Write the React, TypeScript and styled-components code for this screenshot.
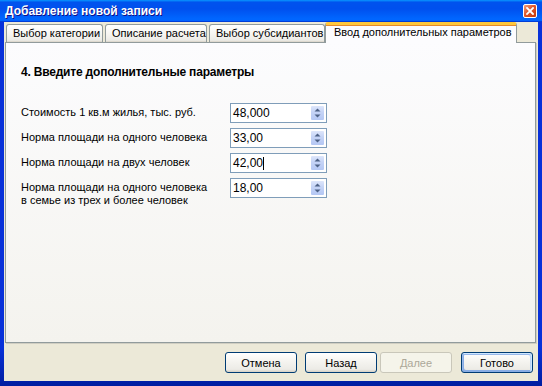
import React from "react";
import styled, { createGlobalStyle } from "styled-components";

const Global = createGlobalStyle`
  html, body { margin: 0; padding: 0; background: #ECE9D8; }
  body { font-family: "Liberation Sans", Arial, sans-serif; }
`;

const FONT = `"Liberation Sans", Arial, sans-serif`;

const Window = styled.div`
  width: 542px;
  height: 386px;
  box-sizing: border-box;
  display: flex;
  flex-direction: column;
  background: linear-gradient(to bottom, #0831d9 0%, #0831d9 90%, #001ea0 100%);
  overflow: hidden;
`;

const TitleBar = styled.div`
  height: 22px;
  flex: none;
  display: flex;
  align-items: center;
  justify-content: space-between;
  padding: 0 5px 0 5px;
  background: linear-gradient(
    to bottom,
    #0997ff 0%,
    #0053ee 10%,
    #0050ee 40%,
    #0066ff 85%,
    #0066ff 92%,
    #005bff 95%,
    #003dd7 97%,
    #003dd7 100%
  );
`;

const Title = styled.span`
  font-family: ${FONT};
  font-weight: bold;
  font-size: 12px;
  color: #fff;
  text-shadow: 1px 1px #0f1089;
`;

const CloseBtn = styled.div`
  width: 14px;
  height: 14px;
  box-sizing: border-box;
  border: 1px solid #fff;
  border-radius: 2px;
  background: linear-gradient(135deg, #f0a07e 0%, #e0582c 45%, #c3390d 100%);
  display: flex;
  align-items: center;
  justify-content: center;
`;

const Client = styled.div`
  flex: 1;
  margin: 0 4px 5px 4px;
  background: #ece9d8;
  display: flex;
  flex-direction: column;
`;

const TabStrip = styled.div`
  display: flex;
  align-items: flex-end;
  height: 20px;
  padding-left: 2px;
  position: relative;
  z-index: 1;
`;

const Tab = styled.div<{ $active?: boolean; $w: number }>`
  box-sizing: border-box;
  width: ${(p) => p.$w}px;
  font-family: ${FONT};
  font-size: 11px;
  color: #000;
  border: 1px solid #919b9c;
  border-bottom: none;
  border-radius: 3px 3px 0 0;
  margin-right: ${(p) => (p.$active ? 0 : 2)}px;
  ${(p) =>
    p.$active
      ? `
    height: 21px;
    margin-left: -2px;
    margin-bottom: -1px;
    background: #fcfcfe;
    border-top: 3px solid #ffc83c;
    box-shadow: inset 0 1px 0 #e68b2c;
    padding: 1px 0 0 8px;
  `
      : `
    height: 18px;
    background: linear-gradient(to bottom, #fff 0%, #f7f6f2 50%, #ecebe6 90%, #d8d2c6 100%);
    padding: 2px 0 0 6px;
  `}
  white-space: nowrap;
  line-height: 13px;
`;

const Panel = styled.div`
  box-sizing: border-box;
  margin: 0 2px 0 1px;
  height: 301px;
  border: 1px solid #919b9c;
  box-shadow: 1px 1px 0 #d0cec2;
  background: linear-gradient(to bottom, #fcfcfe, #f4f3ee);
  padding: 22px 0 0 15px;
`;

const Heading = styled.div`
  font-family: ${FONT};
  font-weight: bold;
  font-size: 12px;
  letter-spacing: -0.2px;
  line-height: 14px;
  color: #000;
  margin-bottom: 24px;
`;

const Form = styled.div`
  display: grid;
  grid-template-columns: 209px 97px;
  row-gap: 5px;
`;

const Label = styled.div`
  font-family: ${FONT};
  font-size: 11px;
  line-height: 13px;
  color: #000;
  padding-top: 3px;
`;

const Field = styled.div`
  box-sizing: border-box;
  height: 20px;
  border: 1px solid #7f9db9;
  background: #fff;
  display: flex;
  align-items: center;
  justify-content: space-between;
  padding: 0 1px 0 2px;
`;

const Value = styled.span<{ $caret?: boolean }>`
  font-family: ${FONT};
  font-size: 12px;
  color: #000;
  ${(p) => (p.$caret ? "border-right: 1px solid #000; line-height: 13px;" : "")}
`;

const Spin = styled.div`
  width: 15px;
  height: 16px;
  box-sizing: border-box;
  border: 1px solid #fff;
  border-radius: 2px;
  background: linear-gradient(to bottom, #dde6fb 0%, #c4d3f6 45%, #b4c7f4 100%);
  display: flex;
  align-items: center;
  justify-content: center;
`;

const Footer = styled.div`
  display: flex;
  justify-content: flex-end;
  padding: 9px 5px 0 0;
`;

const Button = styled.div<{ $disabled?: boolean; $default?: boolean; $gap: number }>`
  box-sizing: border-box;
  width: 72px;
  height: 21px;
  margin-left: ${(p) => p.$gap}px;
  border-radius: 3px;
  border: 1px solid ${(p) => (p.$disabled ? "#c9c7ba" : "#003c74")};
  background: ${(p) =>
    p.$disabled
      ? "#f5f4ea"
      : "linear-gradient(180deg, #fff 0%, #f6f5f1 40%, #ecebe6 86%, #d6d0c5 100%)"};
  color: ${(p) => (p.$disabled ? "#aca899" : "#000")};
  font-family: ${FONT};
  font-size: 11px;
  display: flex;
  align-items: center;
  justify-content: center;
  ${(p) =>
    p.$default
      ? "box-shadow: inset -1px 1px #cee7ff, inset 1px 2px #98b8ea, inset -2px 2px #bcd4f6, inset 1px -1px #89ade4, inset 2px -2px #89ade4;"
      : ""}
`;

const SpinIcon = () => (
  <svg width="7" height="10" viewBox="0 0 7 10">
    <path d="M3.5 0.5 L6.5 3.5 L0.5 3.5 Z" fill="#4d6185" />
    <path d="M3.5 9.5 L6.5 6.5 L0.5 6.5 Z" fill="#4d6185" />
  </svg>
);

const rows = [
  { label: ["Стоимость 1 кв.м жилья, тыс. руб."], value: "48,000" },
  { label: ["Норма площади на одного человека"], value: "33,00" },
  { label: ["Норма площади на двух человек"], value: "42,00", caret: true },
  { label: ["Норма площади на одного человека", "в семье из трех и более человек"], value: "18,00" },
];

export default function App() {
  return (
    <>
      <Global />
      <Window>
        <TitleBar>
          <Title>Добавление новой записи</Title>
          <CloseBtn>
            <svg width="8" height="8" viewBox="0 0 8 8">
              <path d="M1 1 L7 7 M7 1 L1 7" stroke="#fff" strokeWidth="1.8" strokeLinecap="square" />
            </svg>
          </CloseBtn>
        </TitleBar>
        <Client>
          <TabStrip>
            <Tab $w={97}>Выбор категории</Tab>
            <Tab $w={102}>Описание расчета</Tab>
            <Tab $w={116}>Выбор субсидиантов</Tab>
            <Tab $w={192} $active>
              Ввод дополнительных параметров
            </Tab>
          </TabStrip>
          <Panel>
            <Heading>4. Введите дополнительные параметры</Heading>
            <Form>
              {rows.map((r, i) => (
                <React.Fragment key={i}>
                  <Label>
                    {r.label.map((l, j) => (
                      <div key={j}>{l}</div>
                    ))}
                  </Label>
                  <Field>
                    <Value $caret={r.caret}>{r.value}</Value>
                    <Spin>
                      <SpinIcon />
                    </Spin>
                  </Field>
                </React.Fragment>
              ))}
            </Form>
          </Panel>
          <Footer>
            <Button $gap={0}>Отмена</Button>
            <Button $gap={8}>Назад</Button>
            <Button $gap={3} $disabled>
              Далее
            </Button>
            <Button $gap={9} $default>
              Готово
            </Button>
          </Footer>
        </Client>
      </Window>
    </>
  );
}
